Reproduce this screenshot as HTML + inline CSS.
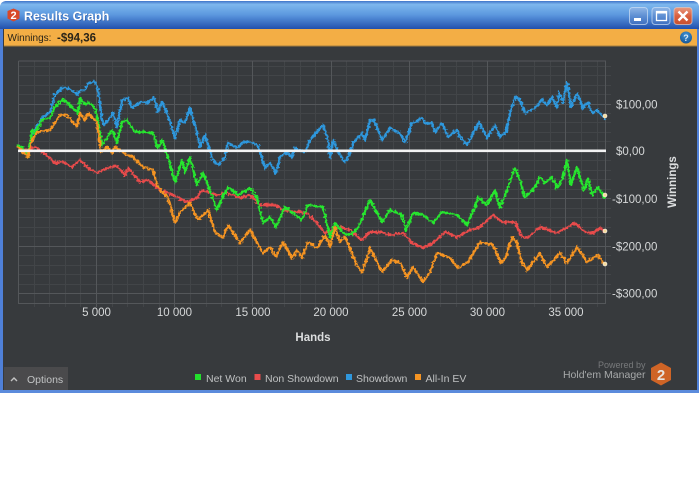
<!DOCTYPE html>
<html><head><meta charset="utf-8">
<style>
html,body{margin:0;padding:0;background:#fff;width:700px;height:495px;overflow:hidden}
svg{position:absolute;left:0;top:0}
text{font-family:"Liberation Sans",sans-serif}
</style></head><body>
<svg width="700" height="495" viewBox="0 0 700 495" xmlns="http://www.w3.org/2000/svg">
<defs>
<linearGradient id="tb" x1="0" y1="0" x2="0" y2="1">
<stop offset="0" stop-color="#3f74c8"/><stop offset=".12" stop-color="#7db7ee"/><stop offset=".5" stop-color="#5b97de"/><stop offset="1" stop-color="#2150ad"/>
</linearGradient>
<linearGradient id="btn" x1="0" y1="0" x2="0" y2="1">
<stop offset="0" stop-color="#8fb6e6"/><stop offset=".5" stop-color="#5e8fd3"/><stop offset="1" stop-color="#3e6fc0"/>
</linearGradient>
<linearGradient id="cls" x1="0" y1="0" x2="0" y2="1">
<stop offset="0" stop-color="#e89a80"/><stop offset=".5" stop-color="#d9603f"/><stop offset="1" stop-color="#c8502f"/>
</linearGradient>
<radialGradient id="hp" cx=".5" cy=".3" r=".8">
<stop offset="0" stop-color="#3f93d6"/><stop offset="1" stop-color="#124f8e"/>
</radialGradient>
<filter id="j" x="-2%" y="-5%" width="104%" height="110%">
<feTurbulence type="fractalNoise" baseFrequency="0.42" numOctaves="2" seed="7"/>
<feDisplacementMap in="SourceGraphic" scale="4.500" xChannelSelector="R" yChannelSelector="G"/>
</filter>
</defs>

<!-- window -->
<path d="M0 8Q0 1 7 1H692Q699 1 699 8V393H0Z" fill="#4f80d8"/>
<path d="M0 8Q0 1 7 1H692Q699 1 699 8V29H0Z" fill="url(#tb)"/>
<rect x="3" y="29" width="694" height="361" fill="#373a3d"/>
<rect x="0" y="390" width="699" height="3" fill="#5b8bdc"/>
<rect x="4" y="29" width="693" height="17" fill="#f3ae45"/>
<rect x="4" y="45.500" width="693" height="1" fill="#a57f3e"/>

<!-- title -->
<path d="M7.500 11L13.500 8.500L19.500 11V18.500L13.500 21.500L7.500 18.500Z" fill="#d8482a"/>
<text x="13.500" y="19" font-size="11" font-weight="700" text-anchor="middle" fill="#fff">2</text>
<text x="24.500" y="21" font-size="12.500" font-weight="700" fill="#0f2f78" opacity=".6">Results Graph</text>
<text x="24" y="20.500" font-size="12.500" font-weight="700" fill="#fff">Results Graph</text>

<!-- window buttons -->
<rect x="629.500" y="7.500" width="18" height="17" rx="3" fill="url(#btn)" stroke="#cfe0f5" stroke-opacity=".7"/>
<rect x="634" y="18" width="7" height="3" fill="#fff"/>
<rect x="652" y="7.500" width="18" height="17" rx="3" fill="url(#btn)" stroke="#cfe0f5" stroke-opacity=".7"/>
<rect x="656.500" y="11.500" width="10" height="9" fill="none" stroke="#fff" stroke-width="1.300"/>
<rect x="656" y="11" width="11" height="2.500" fill="#fff"/>
<rect x="674" y="7.500" width="18" height="17" rx="3" fill="url(#cls)" stroke="#e0c8c0" stroke-opacity=".7"/>
<path d="M678.500 11.500L687.500 20.500M687.500 11.500L678.500 20.500" stroke="#fff" stroke-width="2.400"/>

<!-- info strip -->
<text x="7.500" y="41" font-size="10" fill="#2a2418">Winnings:</text>
<text x="57" y="41.500" font-size="11.500" font-weight="700" fill="#2a2418">-$94,36</text>
<circle cx="686" cy="37.500" r="6" fill="url(#hp)"/>
<text x="686" y="41" font-size="9" font-weight="700" text-anchor="middle" fill="#dbe9f6">?</text>

<!-- minor grid -->
<path fill="none" stroke="#424548" stroke-width="1" d="M34.500 61V307M49.500 61V307M65.500 61V307M80.500 61V307M112.500 61V307M127.500 61V307M143.500 61V307M159.500 61V307M190.500 61V307M206.500 61V307M221.500 61V307M237.500 61V307M268.500 61V307M284.500 61V307M300.500 61V307M315.500 61V307M346.500 61V307M362.500 61V307M378.500 61V307M393.500 61V307M425.500 61V307M440.500 61V307M456.500 61V307M472.500 61V307M503.500 61V307M518.500 61V307M534.500 61V307M550.500 61V307M581.500 61V307M597.500 61V307
M18 66.500H611M18 75.500H611M18 85.500H611M18 94.500H611M18 113.500H611M18 122.500H611M18 132.500H611M18 141.500H611M18 160.500H611M18 170.500H611M18 179.500H611M18 189.500H611M18 208.500H611M18 217.500H611M18 227.500H611M18 236.500H611M18 255.500H611M18 265.500H611M18 274.500H611M18 284.500H611"/>
<!-- major grid -->
<path fill="none" stroke="#54575a" stroke-width="1" d="M18.500 61V303.500H605.500V61H18.500M96.500 61V307M174.500 61V307M252.500 61V307M331.500 61V307M409.500 61V307M487.500 61V307M565.500 61V307
M18 104.500H611M18 198.500H611M18 246.500H611M18 293.500H611"/>

<!-- series -->
<g fill="none" stroke-linejoin="round" stroke-linecap="round" stroke-width="2.400" filter="url(#j)">
<polyline stroke="#e84c4c" points="18,148 28,150 35,147 42,152 50,158 55,163 63,162 72,167 80,160 88,168 97,173 107,168 117,166 125,175 128,168 140,182 148,180 160,190 173,195 187,202 197,198 202,190 217,195 227,193 240,198 250,195 260,205 275,205 283,210 297,212 307,213 317,223 325,233 340,227 350,230 362,240 370,232 380,232 390,235 403,233 412,243 423,248 433,243 445,232 457,237 470,230 480,227 493,215 502,222 515,222 522,237 527,238 540,227 557,233 575,223 585,232 593,233 600,228 604,231"/>
<polyline stroke="#2f97dc" points="33,133 43,117 50,112 55,95 62,88 68,88 78,95 80,90 85,90 88,83 95,82 98,90 102,120 104,125 108,120 113,113 117,127 122,100 128,98 132,108 140,102 147,103 154,98 158,112 162,102 167,113 175,138 180,120 185,123 190,108 197,133 200,147 205,135 213,160 218,165 225,158 228,143 238,148 243,142 250,142 258,145 263,162 265,168 270,163 276,173 280,157 287,152 292,158 295,148 305,152 310,140 323,125 328,140 330,158 333,140 338,152 345,162 350,153 353,143 362,133 365,140 370,120 374,120 382,140 390,128 400,133 405,143 412,123 422,118 425,123 432,123 435,132 442,123 448,137 457,130 460,137 467,145 475,130 479,122 487,138 495,125 500,137 506,132 510,113 515,97 520,100 525,113 535,108 542,100 547,105 552,97 557,108 559,92 563,102 567,83 571,107 577,93 583,108 588,102 592,113 597,110 604,118"/>
<polyline stroke="#26e62e" points="18,145 23,148 28,157 32,130 35,133 42,120 50,118 55,107 62,100 68,103 78,113 80,98 85,105 88,102 95,108 99,127 102,145 107,138 112,130 117,143 122,122 127,120 135,132 142,132 153,133 158,148 162,140 168,157 175,182 182,160 185,173 190,157 197,185 203,173 208,185 217,210 223,197 228,187 238,195 250,188 257,198 263,223 270,217 276,227 285,207 293,213 302,220 308,205 323,207 330,237 335,223 343,233 350,235 358,228 370,200 382,222 390,210 402,215 406,230 413,213 423,215 433,223 442,212 457,215 467,225 475,207 478,197 487,205 495,190 500,208 508,187 515,168 520,180 525,198 535,187 540,177 545,183 552,177 557,188 563,178 567,160 571,185 577,167 584,190 588,178 592,195 598,187 604,197"/>
<polyline stroke="#f59423" points="18,147 28,157 32,140 37,132 50,130 60,115 67,115 77,127 80,113 85,120 88,113 97,122 101,152 107,147 112,153 115,147 127,155 133,157 143,167 153,170 157,185 163,193 168,197 175,223 180,212 190,203 198,220 208,210 215,232 223,238 228,225 240,243 250,230 263,253 270,247 276,257 283,242 292,258 297,250 302,258 308,242 317,248 325,235 330,247 335,227 340,242 345,237 357,265 362,273 370,248 382,272 392,260 400,263 407,277 413,267 423,282 430,272 437,253 450,258 458,268 468,262 480,242 493,245 501,263 506,257 512,237 517,243 522,263 527,270 540,253 547,267 560,253 567,263 577,247 587,262 598,255 604,264"/>
</g>
<rect x="18" y="149.500" width="588" height="2.600" fill="#f2f2f2"/>
<g fill="#f7dc9c" stroke="#f4f4f4" stroke-width=".6">
<circle cx="605" cy="116" r="2"/><circle cx="605" cy="195" r="2"/><circle cx="605" cy="231" r="2"/><circle cx="605" cy="264" r="2"/>
</g>

<!-- axis labels -->
<g font-size="11.500" fill="#d6d8d9">
<text x="616" y="108.500">$100,00</text>
<text x="616" y="155">$0,00</text>
<text x="612" y="203">-$100,00</text>
<text x="612" y="250.500">-$200,00</text>
<text x="612" y="297.500">-$300,00</text>
<g text-anchor="middle">
<text x="96.500" y="316">5 000</text>
<text x="174.500" y="316">10 000</text>
<text x="253" y="316">15 000</text>
<text x="331" y="316">20 000</text>
<text x="409.500" y="316">25 000</text>
<text x="487.500" y="316">30 000</text>
<text x="566" y="316">35 000</text>
</g>
</g>
<text x="313" y="341" font-size="11.500" font-weight="700" fill="#dcdedf" text-anchor="middle">Hands</text>
<text transform="translate(676,182) rotate(-90)" font-size="11.500" font-weight="700" fill="#dcdedf" text-anchor="middle">Winnings</text>

<!-- options -->
<rect x="4" y="367" width="64" height="23" fill="#4a4a4c"/>
<path d="M11 381L14 378L17 381" fill="none" stroke="#c4c4c4" stroke-width="1.400"/>
<text x="27" y="383" font-size="10.500" fill="#c2c4c5">Options</text>

<!-- legend -->
<g font-size="10.500" fill="#bfc1c2">
<rect x="195" y="374" width="6" height="6" fill="#22e02c"/><text x="206" y="382">Net Won</text>
<rect x="254.500" y="374" width="6" height="6" fill="#e84c4c"/><text x="265" y="382">Non Showdown</text>
<rect x="346" y="374" width="6" height="6" fill="#2f97dc"/><text x="356" y="382">Showdown</text>
<rect x="415" y="374" width="6" height="6" fill="#f59423"/><text x="425.500" y="382">All-In EV</text>
</g>

<!-- logo -->
<text x="645.500" y="368" font-size="9" fill="#77797b" text-anchor="end">Powered by</text>
<text x="645.500" y="378" font-size="10.500" fill="#a7a9aa" text-anchor="end">Hold'em Manager</text>
<path d="M661 362.500L671 368V380L661 385.500L651 380V368Z" fill="#cf6426"/>
<text x="661" y="380" font-size="15" font-weight="700" fill="#e8e4df" text-anchor="middle">2</text>
</svg>
</body></html>
